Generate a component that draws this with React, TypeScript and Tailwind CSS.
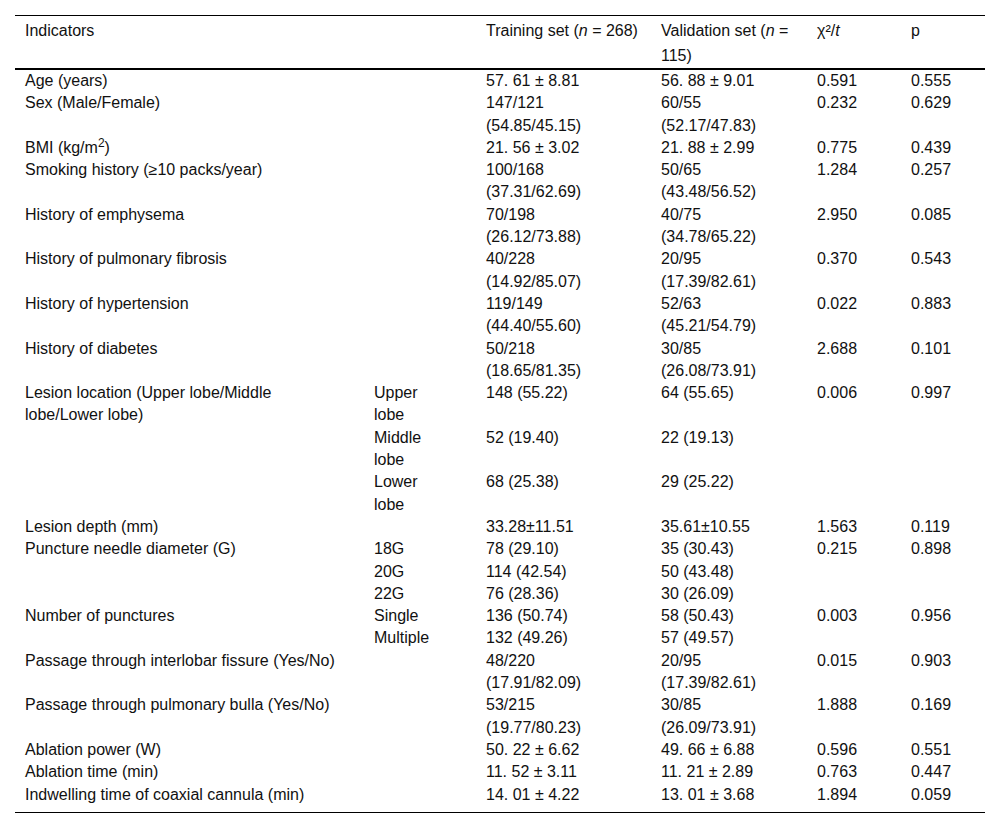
import React from "react";

type Row = [React.ReactNode, React.ReactNode, React.ReactNode, React.ReactNode, React.ReactNode, React.ReactNode];

const two = (a: string, b: string) => (
  <>
    {a}
    <br />
    {b}
  </>
);

const rows: Row[] = [
  ["Age (years)", "", "57. 61 ± 8.81", "56. 88 ± 9.01", "0.591", "0.555"],
  ["Sex (Male/Female)", "", two("147/121", "(54.85/45.15)"), two("60/55", "(52.17/47.83)"), "0.232", "0.629"],
  [
    <>
      BMI (kg/m<sup>2</sup>)
    </>,
    "",
    "21. 56 ± 3.02",
    "21. 88 ± 2.99",
    "0.775",
    "0.439",
  ],
  ["Smoking history (≥10 packs/year)", "", two("100/168", "(37.31/62.69)"), two("50/65", "(43.48/56.52)"), "1.284", "0.257"],
  ["History of emphysema", "", two("70/198", "(26.12/73.88)"), two("40/75", "(34.78/65.22)"), "2.950", "0.085"],
  ["History of pulmonary fibrosis", "", two("40/228", "(14.92/85.07)"), two("20/95", "(17.39/82.61)"), "0.370", "0.543"],
  ["History of hypertension", "", two("119/149", "(44.40/55.60)"), two("52/63", "(45.21/54.79)"), "0.022", "0.883"],
  ["History of diabetes", "", two("50/218", "(18.65/81.35)"), two("30/85", "(26.08/73.91)"), "2.688", "0.101"],
  [two("Lesion location (Upper lobe/Middle", "lobe/Lower lobe)"), two("Upper", "lobe"), "148 (55.22)", "64 (55.65)", "0.006", "0.997"],
  ["", two("Middle", "lobe"), "52 (19.40)", "22 (19.13)", "", ""],
  ["", two("Lower", "lobe"), "68 (25.38)", "29 (25.22)", "", ""],
  ["Lesion depth (mm)", "", "33.28±11.51", "35.61±10.55", "1.563", "0.119"],
  ["Puncture needle diameter (G)", "18G", "78 (29.10)", "35 (30.43)", "0.215", "0.898"],
  ["", "20G", "114 (42.54)", "50 (43.48)", "", ""],
  ["", "22G", "76 (28.36)", "30 (26.09)", "", ""],
  ["Number of punctures", "Single", "136 (50.74)", "58 (50.43)", "0.003", "0.956"],
  ["", "Multiple", "132 (49.26)", "57 (49.57)", "", ""],
  ["Passage through interlobar fissure (Yes/No)", "", two("48/220", "(17.91/82.09)"), two("20/95", "(17.39/82.61)"), "0.015", "0.903"],
  ["Passage through pulmonary bulla (Yes/No)", "", two("53/215", "(19.77/80.23)"), two("30/85", "(26.09/73.91)"), "1.888", "0.169"],
  ["Ablation power (W)", "", "50. 22 ± 6.62", "49. 66 ± 6.88", "0.596", "0.551"],
  ["Ablation time (min)", "", "11. 52 ± 3.11", "11. 21 ± 2.89", "0.763", "0.447"],
  ["Indwelling time of coaxial cannula (min)", "", "14. 01 ± 4.22", "13. 01 ± 3.68", "1.894", "0.059"],
];

const grid = "grid grid-cols-[349px_112px_175px_156px_94px_84px]";

export default function App() {
  return (
    <div
      className="w-[1000px] h-[828px] bg-white pt-[15px] px-[15px] text-[#111] text-[16px]"
      style={{ fontFamily: '"Liberation Sans", Arial, sans-serif' }}
    >
      <div className="border-t border-black">
        <div className={`${grid} pt-[2px] leading-[25px] border-b-2 border-black`}>
          <div className="pl-[10px] whitespace-nowrap">Indicators</div>
          <div className="pl-[10px]"></div>
          <div className="pl-[10px] whitespace-nowrap">
            Training set (<i>n</i> = 268)
          </div>
          <div className="pl-[10px] whitespace-nowrap">
            Validation set (<i>n</i> =
            <br />
            115)
          </div>
          <div className="pl-[10px] whitespace-nowrap">
            χ²/<i>t</i>
          </div>
          <div className="pl-[10px] whitespace-nowrap">p</div>
        </div>
        <div className={`${grid} leading-[22.3px] pb-[6px] border-b border-black`}>
          {rows.map((r, i) =>
            r.map((c, j) => (
              <div key={`${i}-${j}`} className="pl-[10px] whitespace-nowrap">
                {c}
              </div>
            ))
          )}
        </div>
      </div>
    </div>
  );
}
